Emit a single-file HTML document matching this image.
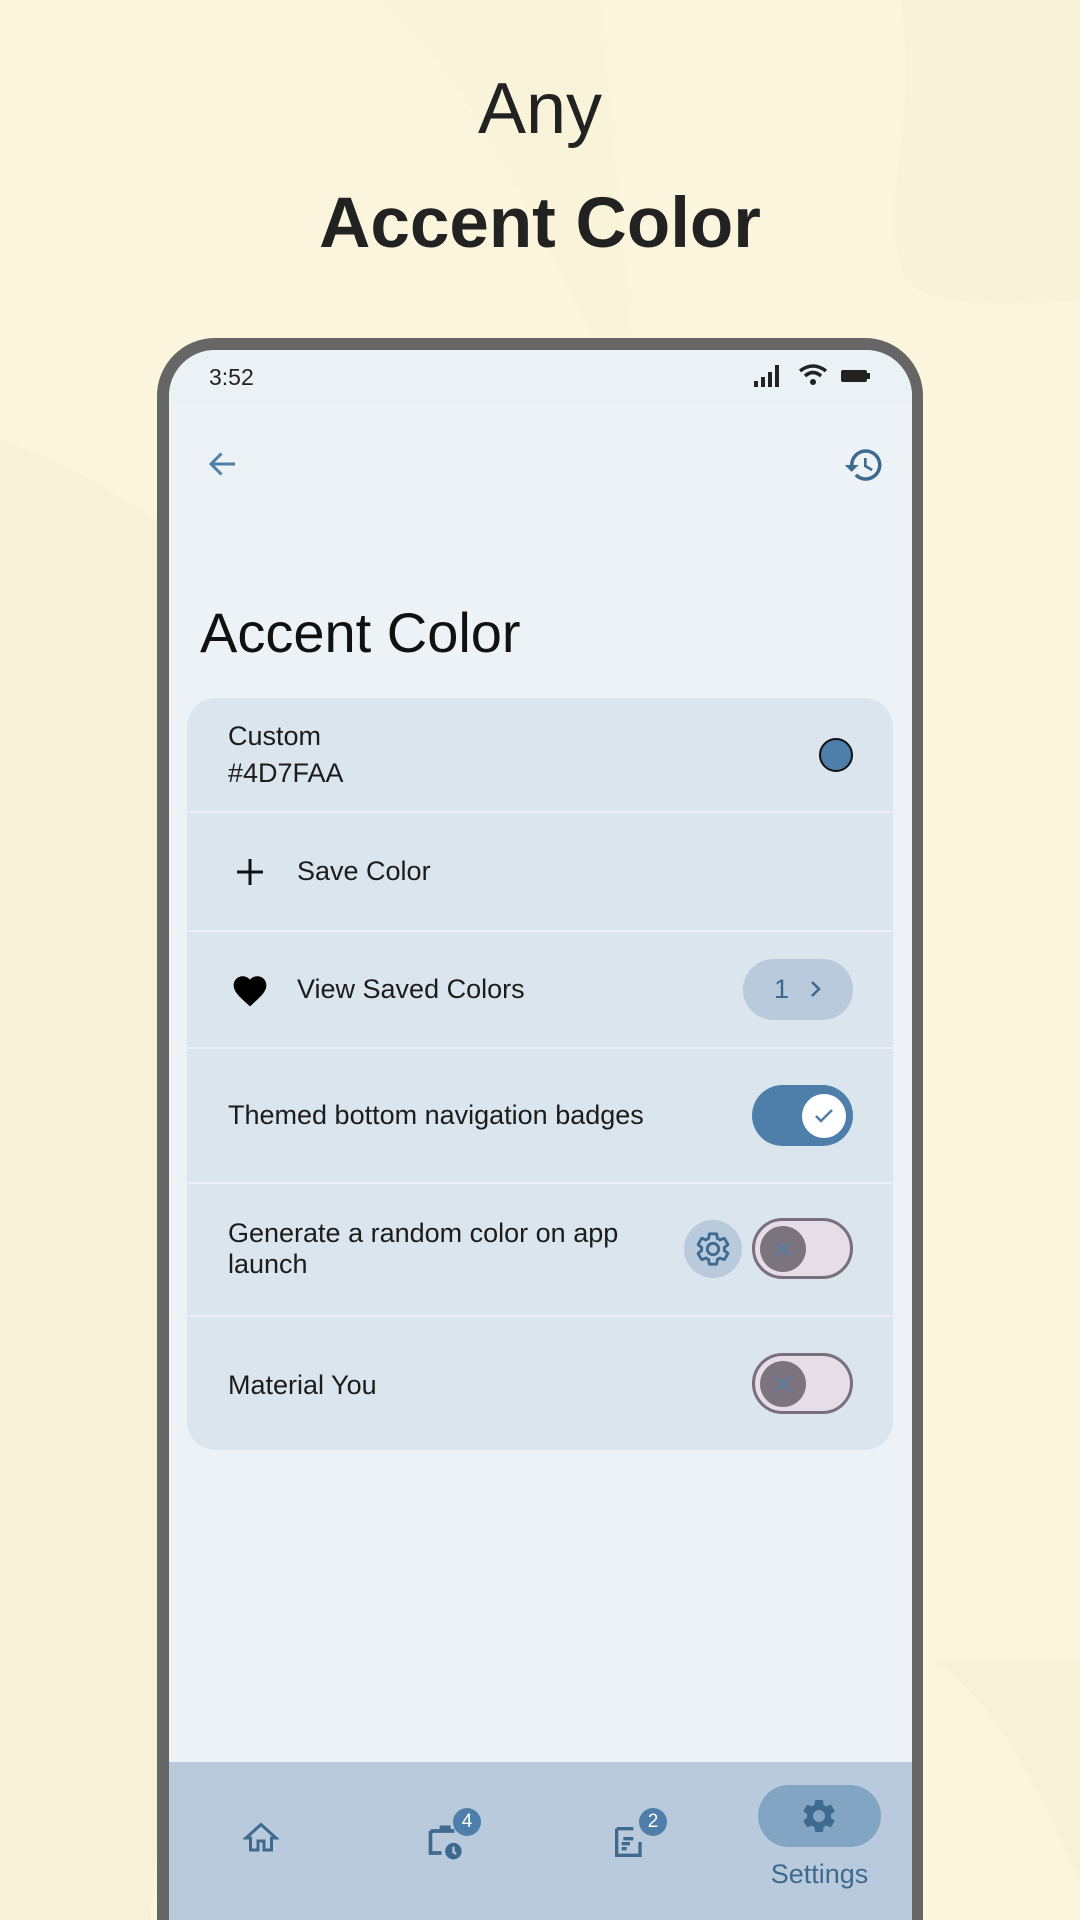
<!DOCTYPE html>
<html style="width:1080px;height:1920px;overflow:hidden"><head><meta charset="utf-8"><style>
*{margin:0;padding:0;box-sizing:border-box}
body{width:1080px;height:1920px;overflow:hidden;background:#faf5dc;font-family:"Liberation Sans",sans-serif}
#w{position:relative;width:1080px;height:1920px;overflow:hidden}
.a{position:absolute}
.t{color:#1c1c1c;font-size:27px;white-space:nowrap}
.div{position:absolute;left:0;right:0;height:2px;background:#eaf0f6}
.tog{position:absolute;width:101px;height:61px;border-radius:31px}
</style></head><body><div id="w">
<svg class="a" style="left:0;top:0" width="1080" height="1920">
<path d="M0 440 C120 480 200 560 280 600 L150 1920 L0 1920 Z" fill="#f7f1d7"/>
<path d="M380 0 C500 100 560 300 640 420 L600 0 Z" fill="#f8f3d9"/>
<path d="M900 0 C920 120 880 200 900 260 C900 300 960 310 1080 300 L1080 0 Z" fill="#f8f2d8"/>
<path d="M930 1660 C1000 1700 1040 1800 1080 1880 L1080 1660 Z" fill="#f7f1d7"/>
</svg>
<div class="a" style="left:0;width:1080px;top:68px;text-align:center;font-size:72px;color:#222">Any</div>
<div class="a" style="left:0;width:1080px;top:183px;text-align:center;font-size:71px;font-weight:bold;color:#222">Accent Color</div>

<div class="a" style="left:157px;top:338px;width:766px;height:1582px;background:#666;border-radius:58px 58px 0 0"></div>
<div class="a" style="left:169px;top:350px;width:743px;height:1570px;background:#edf2f7;border-radius:46px 46px 0 0;overflow:hidden">
  <div class="a" style="left:0;top:0;width:743px;height:54px;background:#ebf2f6"></div>
  <div class="a" style="left:40px;top:14px;font-size:23px;color:#222">3:52</div>
  <svg class="a" style="left:585px;top:13px" width="120" height="26" viewBox="0 0 120 26">
    <rect x="0" y="18" width="4" height="6" fill="#222"/><rect x="7" y="14" width="4" height="10" fill="#222"/><rect x="14" y="9" width="4" height="15" fill="#222"/><rect x="21" y="2" width="4" height="22" fill="#222"/>
    <path d="M46 8 Q59 -2 72 8" stroke="#222" stroke-width="3.5" fill="none"/><path d="M51 13 Q59 6 67 13" stroke="#222" stroke-width="3.5" fill="none"/><circle cx="59" cy="19" r="3" fill="#222"/>
    <rect x="87" y="7" width="26" height="12" rx="2" fill="#222"/><rect x="113" y="10" width="3" height="6" fill="#222"/>
  </svg>
  <svg class="a" style="left:36px;top:96px" width="36" height="36" viewBox="0 0 24 24"><path d="M20 12H5M11 5l-7 7 7 7" stroke="#4d7faa" stroke-width="2" fill="none"/></svg>
  <svg class="a" style="left:674px;top:94px" width="42" height="42" viewBox="0 0 24 24"><path d="M13 3a9 9 0 0 0-9 9H1l3.9 3.9L9 12H6a7 7 0 1 1 2.05 4.95l-1.42 1.42A9 9 0 1 0 13 3zm-1 5v5l4.25 2.52.77-1.28-3.52-2.09V8z" fill="#3f6a90"/></svg>
  <div class="a" style="left:31px;top:250px;font-size:56px;color:#111">Accent Color</div>

  <div class="a" style="left:18px;top:348px;width:706px;height:752px;background:#dbe5ee;border-radius:29px">
    <div class="t a" style="left:41px;top:23px">Custom</div>
    <div class="t a" style="left:41px;top:60px">#4D7FAA</div>
    <div class="a" style="left:632px;top:40px;width:34px;height:34px;border-radius:50%;background:#4d7faa;border:2px solid #111"></div>
    <div class="div" style="top:113px"></div>
    <svg class="a" style="left:48px;top:159px" width="30" height="30"><path d="M15 2V28M2 15H28" stroke="#111" stroke-width="3"/></svg>
    <div class="t a" style="left:110px;top:158px">Save Color</div>
    <div class="div" style="top:232px"></div>
    <svg class="a" style="left:43px;top:274px" width="40" height="36" viewBox="0 0 24 22"><path d="M12 21l-1.45-1.32C5.4 15 2 11.9 2 8.1 2 5 4.4 2.6 7.5 2.6c1.74 0 3.4.8 4.5 2.1 1.1-1.3 2.76-2.1 4.5-2.1C19.6 2.6 22 5 22 8.1c0 3.8-3.4 6.9-8.55 11.58z" fill="#000"/></svg>
    <div class="t a" style="left:110px;top:276px">View Saved Colors</div>
    <div class="a" style="left:556px;top:261px;width:110px;height:61px;border-radius:31px;background:#b8cadc"></div>
    <div class="a" style="left:587px;top:276px;font-size:27px;color:#3f6a90">1</div>
    <svg class="a" style="left:621px;top:281px" width="16" height="20"><path d="M4 3l7 7-7 7" stroke="#3f6a90" stroke-width="2.5" fill="none"/></svg>
    <div class="div" style="top:349px"></div>
    <div class="t a" style="left:41px;top:402px">Themed bottom navigation badges</div>
    <div class="tog" style="left:565px;top:387px;background:#4d7faa"></div>
    <div class="a" style="left:615px;top:396px;width:44px;height:44px;border-radius:50%;background:#fff"></div>
    <svg class="a" style="left:625px;top:406px" width="24" height="24"><path d="M4 12l5 5 11-11" stroke="#4d7faa" stroke-width="2.5" fill="none"/></svg>
    <div class="div" style="top:484px"></div>
    <div class="t a" style="left:41px;top:520px;line-height:31px">Generate a random color on app<br>launch</div>
    <div class="a" style="left:497px;top:522px;width:58px;height:58px;border-radius:50%;background:#b8cadc"></div>
    <svg class="a" style="left:507px;top:532px" width="38" height="38" viewBox="0 0 24 24"><path d="M19.14 12.94c.04-.3.06-.61.06-.94s-.02-.64-.07-.94l2.03-1.58a.49.49 0 0 0 .12-.61l-1.92-3.32a.49.49 0 0 0-.59-.22l-2.39.96c-.5-.38-1.03-.7-1.62-.94l-.36-2.54a.48.48 0 0 0-.48-.41h-3.840a.48.48 0 0 0-.47.41l-.36 2.54c-.59.24-1.13.57-1.62.94l-2.39-.96a.48.48 0 0 0-.59.22L2.74 8.87a.47.47 0 0 0 .12.61l2.03 1.58c-.05.3-.09.63-.09.94s.02.64.07.94l-2.03 1.58a.49.49 0 0 0-.12.61l1.92 3.32c.12.22.37.29.59.22l2.39-.96c.5.38 1.03.7 1.62.94l.36 2.54c.05.24.24.41.48.41h3.84c.24 0 .44-.17.47-.41l.36-2.54c.59-.24 1.13-.56 1.62-.94l2.39.96c.22.08.47 0 .59-.22l1.92-3.32a.46.46 0 0 0-.12-.61zM12 15.6A3.6 3.6 0 1 1 12 8.4a3.6 3.6 0 0 1 0 7.2z" fill="none" stroke="#3f6a90" stroke-width="1.8"/></svg>
    <div class="tog" style="left:565px;top:520px;background:#e6dde9;border:3px solid #7a6f7c"></div>
    <div class="a" style="left:573px;top:528px;width:46px;height:46px;border-radius:50%;background:#7b737e"></div>
    <svg class="a" style="left:586px;top:541px" width="20" height="20"><path d="M4 4l12 12M16 4L4 16" stroke="#4d7faa" stroke-width="2"/></svg>
    <div class="div" style="top:617px"></div>
    <div class="t a" style="left:41px;top:672px">Material You</div>
    <div class="tog" style="left:565px;top:655px;background:#e6dde9;border:3px solid #7a6f7c"></div>
    <div class="a" style="left:573px;top:663px;width:46px;height:46px;border-radius:50%;background:#7b737e"></div>
    <svg class="a" style="left:586px;top:676px" width="20" height="20"><path d="M4 4l12 12M16 4L4 16" stroke="#4d7faa" stroke-width="2"/></svg>
  </div>

  <div class="a" style="left:0;top:1412px;width:743px;height:158px;background:#b8cadc"></div>
  <svg class="a" style="left:74px;top:1470px" width="36" height="36" viewBox="0 0 24 24"><path d="M12 3L2 12h3v8h5v-6h4v6h5v-8h3z" fill="none" stroke="#3f6a90" stroke-width="2"/></svg>
  <svg class="a" style="left:256px;top:1470px" width="44" height="44" viewBox="0 0 24 24"><path d="M9 6V4h4v2M3 6h12v1M3 6v12h6" fill="none" stroke="#3f6a90" stroke-width="2"/><circle cx="15.5" cy="17" r="4.5" fill="#3f6a90"/><path d="M15.5 14.5v3l1.5 1" stroke="#b8cadc" stroke-width="1.2" fill="none"/></svg>
  <div class="a" style="left:284px;top:1458px;width:28px;height:28px;border-radius:50%;background:#4d7faa;color:#fff;font-size:19px;text-align:center;line-height:28px">4</div>
  <svg class="a" style="left:441px;top:1472px" width="40" height="40" viewBox="0 0 24 24"><path d="M4 4h10M4 4v16h14V12" fill="none" stroke="#3f6a90" stroke-width="2"/><path d="M8 10h6M7 13h5M7 16h3" stroke="#3f6a90" stroke-width="2"/></svg>
  <div class="a" style="left:470px;top:1458px;width:28px;height:28px;border-radius:50%;background:#4d7faa;color:#fff;font-size:19px;text-align:center;line-height:28px">2</div>
  <div class="a" style="left:589px;top:1435px;width:123px;height:62px;border-radius:31px;background:#82a5c4"></div>
  <svg class="a" style="left:630px;top:1446px" width="40" height="40" viewBox="0 0 24 24"><path d="M19.14 12.94c.04-.3.06-.61.06-.94s-.02-.64-.07-.94l2.03-1.58a.49.49 0 0 0 .12-.61l-1.92-3.32a.49.49 0 0 0-.59-.22l-2.39.96c-.5-.38-1.03-.7-1.62-.94l-.36-2.54a.48.48 0 0 0-.48-.41h-3.84a.48.48 0 0 0-.47.41l-.36 2.54c-.59.24-1.13.57-1.62.94l-2.39-.96a.48.48 0 0 0-.59.22L2.74 8.87a.47.47 0 0 0 .12.61l2.03 1.58c-.05.3-.09.63-.09.94s.02.64.07.94l-2.03 1.58a.49.49 0 0 0-.12.61l1.92 3.32c.12.22.37.29.59.22l2.39-.96c.5.38 1.03.7 1.62.94l.36 2.54c.05.24.24.41.48.41h3.84c.24 0 .44-.17.47-.41l.36-2.54c.59-.24 1.13-.56 1.62-.94l2.39.96c.22.08.47 0 .59-.22l1.92-3.32a.46.46 0 0 0-.12-.61zM12 15.6A3.6 3.6 0 1 1 12 8.4a3.6 3.6 0 0 1 0 7.2z" fill="#3f6a90"/></svg>
  <div class="a" style="left:589px;top:1509px;width:123px;text-align:center;font-size:27px;color:#3f6a90">Settings</div>
</div>
</div></body></html>
